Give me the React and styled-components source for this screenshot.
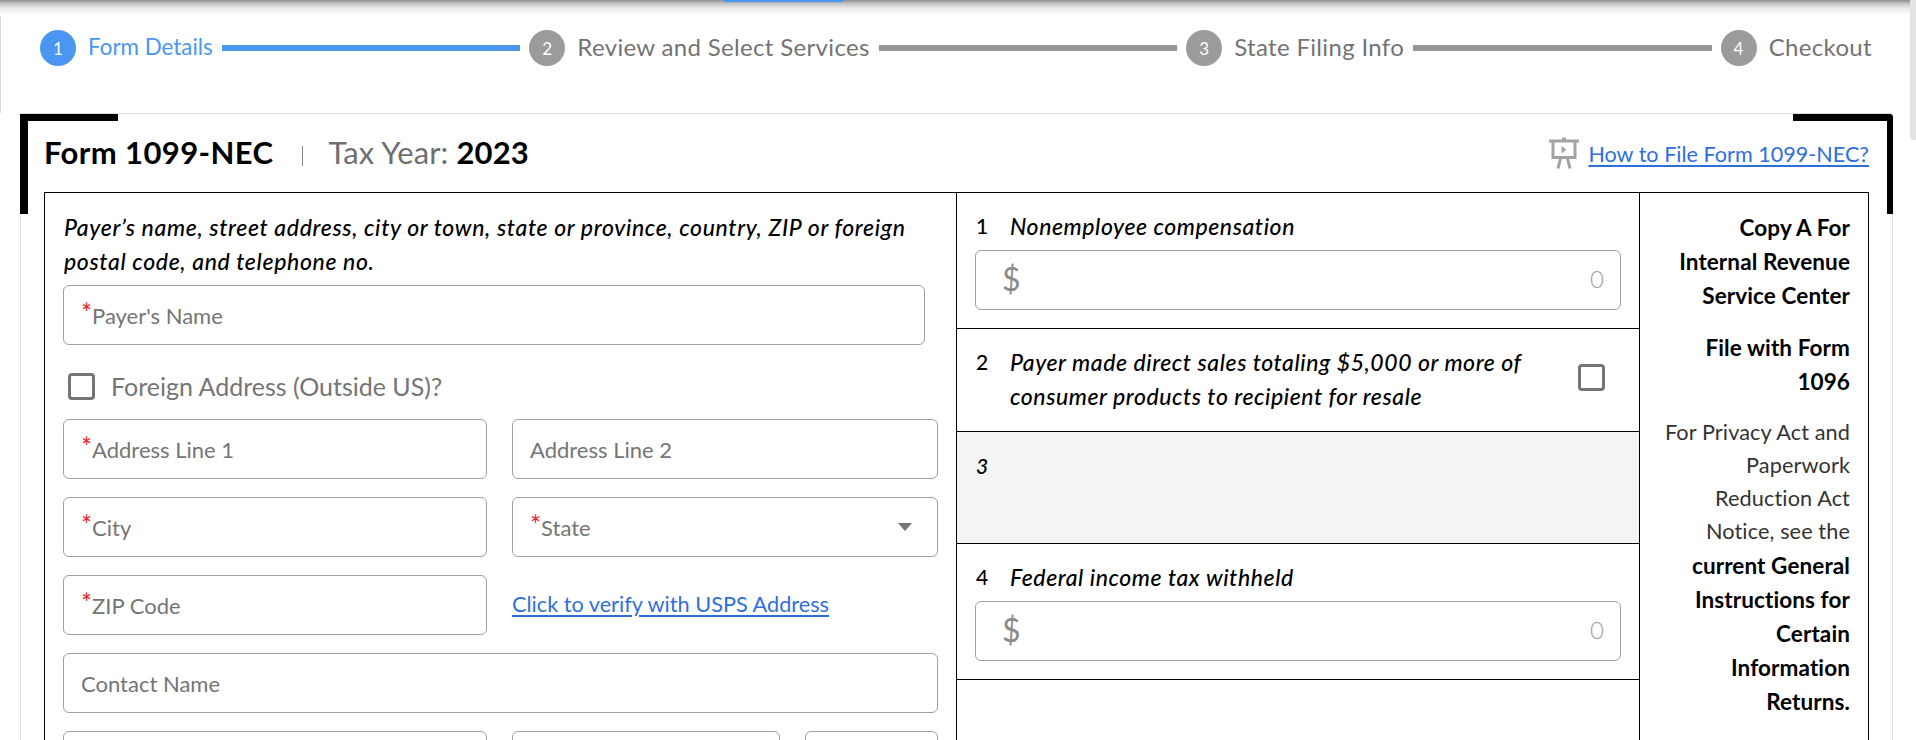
import React from 'react'
import styled, { createGlobalStyle } from 'styled-components'

const GlobalStyle = createGlobalStyle`
    html, body {
        margin: 0;
        padding: 0;
        background: #fff;
        overflow: hidden;
    }
    * {
        box-sizing: border-box;
    }
`;

const Page = styled.div`
    position: relative;
    width: 1916px;
    height: 740px;
    overflow: hidden;
    font-family: Lato, "Open Sans", sans-serif;
    color: #000;
    background: #fff;
`;

const TopShadow = styled.div`
    position: absolute;
    top: 0;
    left: 0;
    right: 0;
    height: 16px;
    background: linear-gradient(#8f8f8f 0, #c9c9c9 4px, #eeeeee 9px, #ffffff 16px);
`;

const ActiveTab = styled.div`
    position: absolute;
    top: 0;
    left: 724px;
    width: 119px;
    height: 2px;
    background: #4a96f0;
`;

const ScrollThumb = styled.div`
    position: absolute;
    top: 0;
    right: 0;
    width: 6px;
    height: 140px;
    background: #e4e4e4;
    border-bottom-left-radius: 4px;
`;

const Stepper = styled.div`
    height: 113px;
    padding: 30px 44px 0 39px;
    border-left: 1px solid #dcdcdc;
    display: flex;
    align-items: flex-start;
`;

const Step = styled.div`
    display: flex;
    align-items: center;
    height: 32px;
    gap: 12px;
    color: ${p => p.$active ? '#4a96f0' : '#737373'};
    font-size: ${p => p.$active ? '22.4px' : '24px'};
    letter-spacing: ${p => p.$active ? '0' : '0.33px'};
    white-space: nowrap;
`;

const StepNum = styled.span`
    width: 36px;
    height: 36px;
    margin-bottom: -4px;
    border-radius: 50%;
    display: flex;
    align-items: center;
    justify-content: center;
    background: ${p => p.$active ? '#4a96f0' : '#9b9b9b'};
    color: #fff;
    font-size: 17px;
`;

const StepLine = styled.div`
    flex: 1;
    height: 6px;
    margin: 15px 9px 0;
    background: ${p => p.$active ? '#4a96f0' : '#949494'};
`;

const Card = styled.div`
    position: relative;
    margin: 0 23px 0 20px;
    height: 627px;
    padding: 0 23px;
    border-top: 1px solid #e2e2e2;
    border-left: 1px solid #e2e2e2;
    border-right: 1px solid #e2e2e2;
`;

const Corner = styled.div`
    position: absolute;
    top: 0;
    ${p => p.$right ? 'right: -1px;' : 'left: -1px;'}
    width: ${p => p.$right ? '100px' : '98px'};
    height: 100px;
    border-top: 7px solid #000;
    ${p => p.$right ? 'border-right: 6px solid #000; border-top-right-radius: 4px;' : 'border-left: 8px solid #000;'}
`;

const CardHead = styled.div`
    height: 78px;
    padding-bottom: 2px;
    display: flex;
    align-items: center;
`;

const FormTitle = styled.h1`
    margin: 0;
    font-size: 31px;
    font-weight: 700;
    letter-spacing: 0.4px;
`;

const Divider = styled.span`
    width: 1px;
    height: 20px;
    margin: 8px 25px 0 29px;
    background: #8a8a8a;
`;

const TaxYear = styled.div`
    font-size: 31px;
    color: #6f6f6f;
    letter-spacing: 0.1px;
    b {
        color: #000;
    }
`;

const HelpLink = styled.a`
    margin: 3px 0 0 auto;
    display: flex;
    align-items: center;
    gap: 9px;
    font-size: 21.6px;
    color: #2f6fdc;
    svg {
        margin-top: -1px;
    }
    span {
        text-decoration: underline;
        text-underline-offset: 3px;
    }
`;

const FormGrid = styled.div`
    display: grid;
    grid-template-columns: 912px 683px 1fr;
    width: 1825px;
    height: 560px;
    border: 1px solid #000;
    border-bottom: 0;
`;

const PayerCell = styled.div`
    padding: 18px 18px 0 18px;
    border-right: 1px solid #000;
`;

const Caption = styled.p`
    margin: -1px 0 0 1px;
    font-size: 23px;
    letter-spacing: 0.65px;
    line-height: 34px;
    font-style: italic;
    font-weight: 500;
`;

const Field = styled.div`
    height: 60px;
    padding: 0 17px;
    display: flex;
    align-items: center;
    border: 1px solid #a0a0a0;
    border-radius: 6px;
    font-size: 22px;
    color: #757575;
    background: #fff;
    ${p => p.$width && `width: ${p.$width}px;`}
    ${p => p.$mt && `margin-top: ${p.$mt}px;`}
`;

const Required = styled.span`
    color: #e8222a;
    align-self: flex-start;
    margin-top: 17px;
    font-size: 26px;
    line-height: 20px;
`;

const Caret = styled.span`
    margin-left: auto;
    margin-right: 8px;
    width: 0;
    height: 0;
    border-left: 7px solid transparent;
    border-right: 7px solid transparent;
    border-top: 8px solid #757575;
`;

const CheckRow = styled.label`
    height: 74px;
    display: flex;
    align-items: center;
    gap: 16px;
    padding: 8px 0 0 5px;
    font-size: 25px;
    color: #757575;
`;

const Box = styled.span`
    flex: none;
    width: 27px;
    height: 27px;
    border: 3px solid #757575;
    border-radius: 4px;
    background: #fff;
`;

const FieldRows = styled.div`
    display: flex;
    flex-direction: column;
    gap: 18px;
`;

const FieldRow = styled.div`
    display: grid;
    grid-template-columns: ${p => p.$cols || '424px 1fr'};
    gap: 25px;
    align-items: center;
`;

const VerifyLink = styled.a`
    font-size: 21.7px;
    color: #2f6fdc;
    text-decoration: underline;
    text-underline-offset: 3px;
    margin-top: -2px;
`;

const BoxesCol = styled.div`
    display: flex;
    flex-direction: column;
    border-right: 1px solid #000;
`;

const BoxCell = styled.div`
    height: ${p => p.$height}px;
    padding: ${p => p.$top}px 18px 0 19px;
    border-bottom: 1px solid #000;
    background: ${p => p.$shaded ? '#f4f4f4' : '#fff'};
`;

const BoxLabel = styled.div`
    display: flex;
    font-size: 23px;
    letter-spacing: 0.57px;
    line-height: 34px;
    font-style: italic;
    font-weight: 500;
`;

const BoxNum = styled.span`
    flex: none;
    width: 34px;
    font-size: 21px;
    letter-spacing: 0;
    font-style: ${p => p.$italic ? 'italic' : 'normal'};
`;

const Money = styled.div`
    height: 60px;
    margin: 7px 0 0 -1px;
    padding: 0 16px 4px 26px;
    display: flex;
    align-items: center;
    justify-content: space-between;
    border: 1px solid #a0a0a0;
    border-radius: 6px;
    color: #8a8a8a;
    font-size: 32px;
    em {
        font-style: normal;
        font-size: 24px;
        font-weight: 300;
        color: #a0a0a0;
    }
`;

const CheckLine = styled.div`
    display: flex;
    align-items: center;
    justify-content: space-between;
    padding-right: 16px;
    ${Box} {
        margin-top: -4px;
    }
`;

const CopyCol = styled.div`
    padding: 18px 18px 0 10px;
    text-align: right;
    font-size: 22.5px;
    letter-spacing: 0.1px;
    line-height: 34px;
    color: #000;
`;

const CopyTitle = styled.div`
    font-weight: 700;
    margin-bottom: ${p => p.$mb || 0}px;
`;

const Notice = styled.div`
    font-size: 21.7px;
    line-height: 33px;
    color: #333;
    margin-bottom: 1px;
`;

const EaselIcon = () => (
    <svg width="30" height="32" viewBox="0 0 30 32" fill="none" stroke="#a3a3a3">
        <path d="M13 3V0.5h4V3" fill="#a3a3a3" stroke="none" />
        <path d="M0 4h30" strokeWidth="3" />
        <path d="M4 5v15.5h22V5" strokeWidth="3" />
        <path d="M12.5 9v7.5l5-3.75z" fill="#a3a3a3" stroke="none" />
        <path d="M11.5 21.5L9 31.5M18.5 21.5L21 31.5" strokeWidth="3" />
    </svg>
);

const steps = ['Form Details', 'Review and Select Services', 'State Filing Info', 'Checkout'];

function App() {
    return (
        <Page>
            <GlobalStyle />
            <Stepper>
                {steps.map((label, i) => (
                    <React.Fragment key={label}>
                        <Step $active={i === 0}>
                            <StepNum $active={i === 0}>{i + 1}</StepNum>
                            {label}
                        </Step>
                        {i < steps.length - 1 && <StepLine $active={i === 0} />}
                    </React.Fragment>
                ))}
            </Stepper>
            <Card>
                <Corner />
                <Corner $right />
                <CardHead>
                    <FormTitle>Form 1099-NEC</FormTitle>
                    <Divider />
                    <TaxYear>Tax Year: <b>2023</b></TaxYear>
                    <HelpLink>
                        <EaselIcon />
                        <span>How to File Form 1099-NEC?</span>
                    </HelpLink>
                </CardHead>
                <FormGrid>
                    <PayerCell>
                        <Caption>Payer’s name, street address, city or town, state or province, country, ZIP or foreign postal code, and telephone no.</Caption>
                        <Field $width={862} $mt={7}><Required>*</Required>Payer's Name</Field>
                        <CheckRow><Box />Foreign Address (Outside US)?</CheckRow>
                        <FieldRows>
                            <FieldRow>
                                <Field><Required>*</Required>Address Line 1</Field>
                                <Field>Address Line 2</Field>
                            </FieldRow>
                            <FieldRow>
                                <Field><Required>*</Required>City</Field>
                                <Field><Required>*</Required>State<Caret /></Field>
                            </FieldRow>
                            <FieldRow>
                                <Field><Required>*</Required>ZIP Code</Field>
                                <VerifyLink>Click to verify with USPS Address</VerifyLink>
                            </FieldRow>
                            <FieldRow $cols="1fr">
                                <Field>Contact Name</Field>
                            </FieldRow>
                            <FieldRow $cols="424px 268px 1fr">
                                <Field />
                                <Field />
                                <Field />
                            </FieldRow>
                        </FieldRows>
                    </PayerCell>
                    <BoxesCol>
                        <BoxCell $height={136} $top={16}>
                            <BoxLabel><BoxNum>1</BoxNum>Nonemployee compensation</BoxLabel>
                            <Money>$<em>0</em></Money>
                        </BoxCell>
                        <BoxCell $height={103} $top={16}>
                            <CheckLine>
                                <BoxLabel>
                                    <BoxNum>2</BoxNum>
                                    <span>Payer made direct sales totaling $5,000 or more of<br />consumer products to recipient for resale</span>
                                </BoxLabel>
                                <Box />
                            </CheckLine>
                        </BoxCell>
                        <BoxCell $height={112} $top={17} $shaded>
                            <BoxLabel><BoxNum $italic>3</BoxNum></BoxLabel>
                        </BoxCell>
                        <BoxCell $height={136} $top={16}>
                            <BoxLabel><BoxNum>4</BoxNum>Federal income tax withheld</BoxLabel>
                            <Money>$<em>0</em></Money>
                        </BoxCell>
                    </BoxesCol>
                    <CopyCol>
                        <CopyTitle $mb={18}>Copy A For<br />Internal Revenue<br />Service Center</CopyTitle>
                        <CopyTitle $mb={17}>File with Form<br />1096</CopyTitle>
                        <Notice>For Privacy Act and<br />Paperwork<br />Reduction Act<br />Notice, see the</Notice>
                        <CopyTitle>current General<br />Instructions for<br />Certain<br />Information<br />Returns.</CopyTitle>
                    </CopyCol>
                </FormGrid>
            </Card>
            <TopShadow />
            <ActiveTab />
            <ScrollThumb />
        </Page>
    )
}

export default App
